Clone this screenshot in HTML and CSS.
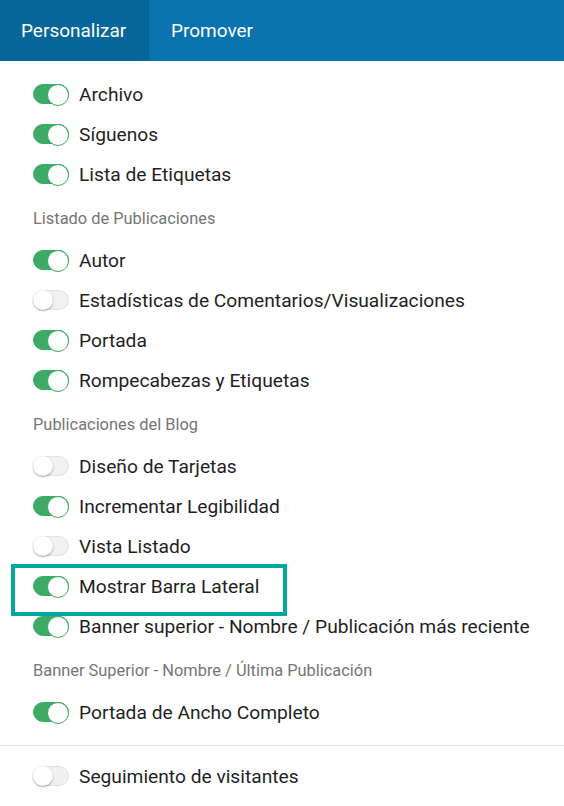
FILE: index.html
```html
<!DOCTYPE html>
<html lang="es">
<head>
<meta charset="utf-8">
<link rel="stylesheet" href="styles.css">
</head>
<body>
<div class="tabs">
  <div class="tab active">Personalizar</div>
  <div class="tab">Promover</div>
</div>
<div class="content">
  <div class="row"><span class="toggle on"></span><span class="label">Archivo</span></div>
  <div class="row"><span class="toggle on"></span><span class="label">Síguenos</span></div>
  <div class="row"><span class="toggle on"></span><span class="label">Lista de Etiquetas</span></div>
  <div class="section">Listado de Publicaciones</div>
  <div class="row"><span class="toggle on"></span><span class="label">Autor</span></div>
  <div class="row"><span class="toggle"></span><span class="label">Estadísticas de Comentarios/Visualizaciones</span></div>
  <div class="row"><span class="toggle on"></span><span class="label">Portada</span></div>
  <div class="row"><span class="toggle on"></span><span class="label">Rompecabezas y Etiquetas</span></div>
  <div class="section">Publicaciones del Blog</div>
  <div class="row"><span class="toggle"></span><span class="label">Diseño de Tarjetas</span></div>
  <div class="row"><span class="toggle on"></span><span class="label">Incrementar Legibilidad</span></div>
  <div class="row"><span class="toggle"></span><span class="label">Vista Listado</span></div>
  <div class="row highlight"><span class="toggle on"></span><span class="label">Mostrar Barra Lateral</span></div>
  <div class="row"><span class="toggle on"></span><span class="label">Banner superior - Nombre / Publicación más reciente</span></div>
  <div class="section">Banner Superior - Nombre / Última Publicación</div>
  <div class="row"><span class="toggle on"></span><span class="label">Portada de Ancho Completo</span></div>
</div>
<div class="divider"></div>
<div class="content bottom">
  <div class="row"><span class="toggle"></span><span class="label">Seguimiento de visitantes</span></div>
</div>
</body>
</html>
```
FILE: styles.css
```css
* { box-sizing: border-box; }
body {
  margin: 0;
  background: #fff;
  font-family: Roboto, "Liberation Sans", sans-serif;
  color: #212121;
}
.tabs {
  display: flex;
  height: 61px;
  background: #0873ad;
}
.tab {
  display: flex;
  align-items: center;
  padding: 0 22px;
  color: #fff;
  font-size: 19px;
}
.tab.active {
  background: #076699;
  width: 149px;
  padding-left: 21px;
}
.content {
  padding: 13px 0 0 33px;
}
.content.bottom {
  padding-top: 10px;
}
.row {
  display: flex;
  align-items: center;
  gap: 10px;
  height: 40px;
}
.label {
  font-size: 19.2px;
  color: #1f1f1f;
}
.section {
  height: 46px;
  display: flex;
  align-items: center;
  padding-top: 2px;
  font-size: 16.4px;
  color: #757575;
}
.toggle {
  position: relative;
  width: 36px;
  height: 20px;
  border-radius: 10px;
  background: #f1f1f1;
  border: 1px solid #e2e2e2;
  flex: none;
}
.toggle::after {
  content: "";
  position: absolute;
  top: -1px;
  left: -1px;
  width: 20px;
  height: 20px;
  border-radius: 50%;
  background: #fff;
  box-shadow: 0 1px 2px rgba(0,0,0,0.35);
}
.toggle.on {
  background: #3dab66;
  border-color: #3dab66;
}
.toggle.on::after {
  left: auto;
  right: -1px;
  box-shadow: none;
  border: 1px solid #3dab66;
}
.highlight {
  position: relative;
}
.highlight::after {
  content: "";
  position: absolute;
  left: -22px;
  top: -2px;
  width: 268px;
  height: 44px;
  border: 4px solid #00a89f;
}
.divider {
  margin-top: 13px;
  height: 1px;
  background: #e3e3e3;
}
```
